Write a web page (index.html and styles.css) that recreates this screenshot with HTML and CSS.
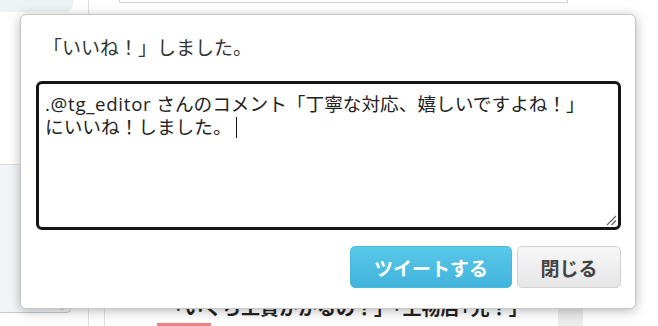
FILE: index.html
```html
<!DOCTYPE html>
<html lang="ja">
<head>
<meta charset="utf-8">
<title>いいね！しました</title>
<link rel="stylesheet" href="styles.css">
</head>
<body>
<div class="page">
  <aside class="side">
    <div class="side-top"></div>
    <div class="side-mid"></div>
    <div class="side-low">
      <div class="side-box"><span class="more">»</span></div>
    </div>
  </aside>
  <main class="main">
    <div class="search"></div>
    <div class="feed">
      <div class="feed-inner">
        <p class="feed-text">「いくら工賃かかるの？」「土物店+光？」</p>
        <span class="tag"></span>
      </div>
      <div class="scroll"></div>
    </div>
  </main>
</div>

<div class="dialog" role="dialog">
  <p class="dialog-title">「いいね！」しました。</p>
  <div class="editor"><span class="latin">.@tg_editor</span> さんのコメント「丁寧な対応、嬉しいですよね！」にいいね！しました。<span class="caret"></span>
    <svg class="grip" width="12" height="12" viewBox="0 0 12 12" aria-hidden="true">
      <path d="M11 2 L2 11 M11 6.5 L6.5 11" stroke="#666" stroke-width="1.2" fill="none"/>
    </svg>
  </div>
  <div class="actions">
    <button class="btn btn-tweet" type="button">ツイートする</button>
    <button class="btn btn-close" type="button">閉じる</button>
  </div>
</div>
</body>
</html>
```
FILE: styles.css
```css
* { box-sizing: border-box; }

html, body {
  margin: 0;
  padding: 0;
  background: #fff;
  width: 658px;
  height: 326px;
  overflow: hidden;
  font-family: "Noto Sans CJK JP", "Noto Sans", sans-serif;
  color: #333;
}

.page {
  display: flex;
  height: 326px;
}

/* left sidebar */
.side {
  width: 89px;
  border-right: 1px solid #dedede;
  display: flex;
  flex-direction: column;
}
.side-top {
  width: 73px;
  height: 12px;
  background: #edf3f5;
  border-bottom-right-radius: 8px;
}
.side-mid {
  height: 152px;
}
.side-low {
  border-top: 1px solid #dcdcdc;
}
.side-box {
  width: 72px;
  height: 148px;
  background: linear-gradient(to right, #f1f5f8, #f6f8fa);
  border-bottom: 1px solid #c9c9c9;
  border-right: 1px solid #dcdcdc;
  border-bottom-right-radius: 6px;
  display: flex;
  align-items: flex-end;
  justify-content: flex-end;
  padding: 0 6px 0 0;
}
.more {
  font-size: 12px;
  line-height: 12px;
  color: #888;
}

/* main column */
.main {
  flex: 1;
  display: flex;
  flex-direction: column;
}
.search {
  margin-left: 30px;
  width: 449px;
  height: 3px;
  border: 1px solid #d4d4d4;
  border-top: none;
}
.feed {
  margin-top: auto;
  margin-left: 15px;
  width: 479px;
  height: 46px;
  border-left: 1px solid #dedede;
  display: flex;
}
.feed-inner {
  flex: 1;
  padding: 15px 0 0 52px;
}
.feed-text {
  margin: 0 0 0 8px;
  font-size: 19px;
  line-height: 24px;
  font-weight: bold;
  color: #222;
  white-space: nowrap;
}
.tag {
  display: block;
  margin-top: 4px;
  width: 54px;
  height: 6px;
  background: #f38181;
}
.scroll {
  width: 25px;
  background: #ebebeb;
}

/* dialog overlay */
.dialog {
  position: absolute;
  left: 20px;
  top: 14px;
  width: 616px;
  height: 295px;
  background: #fff;
  border: 1px solid #c6c6c6;
  border-radius: 6px;
  box-shadow: 0 2px 12px rgba(0, 0, 0, 0.28);
  padding: 0 14px 0 15px;
  display: flex;
  flex-direction: column;
}
.dialog-title {
  margin: 20px 0 0 7px;
  font-size: 19px;
  line-height: 24px;
  color: #333;
}
.editor {
  position: relative;
  margin-top: 22px;
  height: 149px;
  border: 3px solid #151515;
  border-radius: 6px;
  padding: 8px 20px 0 6px;
  font-family: "Open Sans", "Noto Sans CJK JP", sans-serif;
  font-size: 18.67px;
  line-height: 23px;
  color: #222;
}
.latin {
  letter-spacing: 0.7px;
}
.caret {
  display: inline-block;
  width: 1px;
  height: 21px;
  background: #111;
  margin-left: 4px;
  vertical-align: -4px;
}
.grip {
  position: absolute;
  right: 1px;
  bottom: 1px;
}
.actions {
  margin-top: 16px;
  display: flex;
  justify-content: flex-end;
  gap: 5px;
}
.btn {
  height: 42px;
  border-radius: 5px;
  font-family: "Noto Sans CJK JP", sans-serif;
  font-size: 19px;
  font-weight: bold;
  padding: 0;
  cursor: pointer;
}
.btn-tweet {
  width: 162px;
  color: #fff;
  border: 1px solid #49b9de;
  background: linear-gradient(to bottom, #58c9ea, #42b3db);
}
.btn-close {
  width: 104px;
  color: #444;
  border: 1px solid #d2d2d2;
  background: linear-gradient(to bottom, #f7f7f7, #e6e6e6);
}
```
